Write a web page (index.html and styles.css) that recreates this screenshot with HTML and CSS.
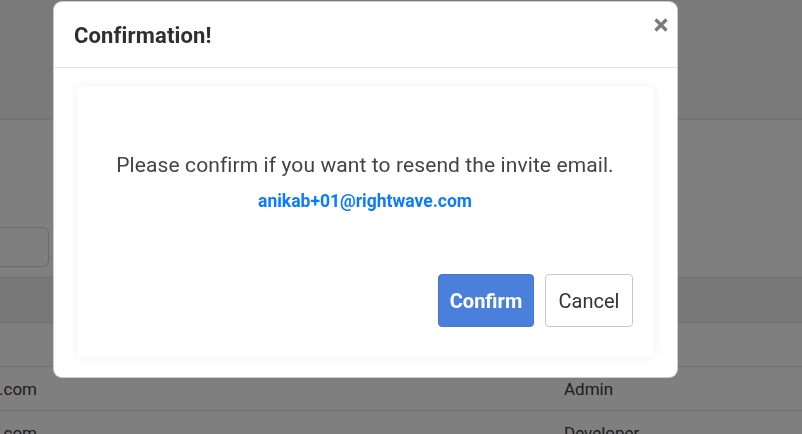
FILE: index.html
```html
<!DOCTYPE html>
<html lang="en">
<head>
<meta charset="utf-8">
<title>Confirmation</title>
<link rel="stylesheet" href="styles.css">
</head>
<body>
<div class="page">
  <div class="page-head"></div>
  <div class="toolbar">
    <div class="search"></div>
  </div>
  <div class="table">
    <div class="thead"></div>
    <div class="row"></div>
    <div class="row">
      <div class="cell-email"><span>anikab+02@rightwave.com</span></div>
      <div class="cell-role">Admin</div>
    </div>
    <div class="row">
      <div class="cell-email"><span>anikab+03@rightwave.com</span></div>
      <div class="cell-role">Developer</div>
    </div>
  </div>
</div>

<div class="overlay">
  <div class="modal">
    <div class="modal-header">
      <h5 class="modal-title">Confirmation!</h5>
      <button class="close" aria-label="Close">
        <svg width="14" height="14" viewBox="0 0 14 14"><path d="M1.5 1.5 L12.5 12.5 M12.5 1.5 L1.5 12.5" stroke="#7a7a7a" stroke-width="3.2" stroke-linecap="butt"/></svg>
      </button>
    </div>
    <div class="modal-body">
      <div class="card">
        <p class="msg">Please confirm if you want to resend the invite email.</p>
        <p class="email">anikab+01@rightwave.com</p>
        <div class="actions">
          <button class="btn btn-primary">Confirm</button>
          <button class="btn btn-default">Cancel</button>
        </div>
      </div>
    </div>
  </div>
</div>
</body>
</html>
```

FILE: styles.css
```css
* { box-sizing: border-box; }
html, body { margin: 0; padding: 0; }
body {
  width: 802px;
  height: 434px;
  overflow: hidden;
  font-family: Roboto, "Liberation Sans", sans-serif;
  background: #fff;
  color: #333;
}
.page { width: 802px; }
.page-head {
  height: 120px;
  background: #f5f5f5;
  border-bottom: 1px solid #e2e2e2;
}
.toolbar {
  height: 157px;
  padding-top: 107px;
}
.search {
  width: 49px;
  height: 40px;
  border: 1px solid #d4d4d4;
  border-left: none;
  border-radius: 0 6px 6px 0;
  background: #fff;
}
.thead {
  height: 46px;
  background: #f1f1f1;
  border-top: 1px solid #e2e2e2;
  border-bottom: 1px solid #e2e2e2;
}
.row {
  height: 44px;
  border-bottom: 1px solid #e2e2e2;
  display: flex;
  align-items: center;
  font-size: 17px;
  color: #3a3a3a;
}
.cell-email {
  width: 37px;
  overflow: hidden;
  display: flex;
  justify-content: flex-end;
  white-space: nowrap;
}
.cell-email span { flex: none; }
.cell-role { margin-left: 527px; }

.overlay {
  position: fixed;
  inset: 0;
  background: rgba(0, 0, 0, 0.5);
}
.modal {
  margin: 1px 0 0 53px;
  width: 625px;
  height: 377px;
  background: #fff;
  border: 1px solid rgba(0, 0, 0, 0.2);
  border-radius: 9px;
  display: flex;
  flex-direction: column;
}
.modal-header {
  height: 66px;
  border-bottom: 1px solid #e3e3e3;
  display: flex;
  justify-content: space-between;
  align-items: flex-start;
  padding: 0 8px 0 20px;
}
.modal-title {
  margin: 19px 0 0;
  font-size: 22px;
  font-weight: 700;
  line-height: 30px;
  letter-spacing: 0.15px;
  color: #2f2f2f;
}
.close {
  border: none;
  background: none;
  padding: 0;
  margin-top: 16px;
  margin-right: 1px;
  width: 14px;
  height: 14px;
  display: block;
}
.close svg { display: block; }
.modal-body {
  padding: 18px 23px 20px;
  flex: 1;
  display: flex;
}
.card {
  flex: 1;
  background: #fff;
  border-radius: 4px;
  box-shadow: 0 0 10px rgba(0, 0, 0, 0.07);
  padding: 64px 21px 30px 20px;
  text-align: center;
}
.msg {
  margin: 0;
  font-size: 21px;
  line-height: 30px;
  letter-spacing: 0.1px;
  color: #444;
}
.email {
  margin: 9px 0 0;
  font-size: 17.5px;
  line-height: 24px;
  font-weight: 700;
  color: #0a7cff;
}
.actions {
  margin-top: 61px;
  display: flex;
  justify-content: flex-end;
  gap: 11px;
}
.btn {
  height: 53px;
  font-family: Roboto, "Liberation Sans", sans-serif;
  font-size: 20px;
  border-radius: 4px;
  padding: 0;
}
.btn-primary {
  width: 96px;
  background: #4a7fdb;
  border: 1px solid #4577cf;
  color: #fff;
  font-weight: 700;
}
.btn-default {
  width: 88px;
  background: #fff;
  border: 1px solid #c9c9c9;
  color: #333;
}
```
